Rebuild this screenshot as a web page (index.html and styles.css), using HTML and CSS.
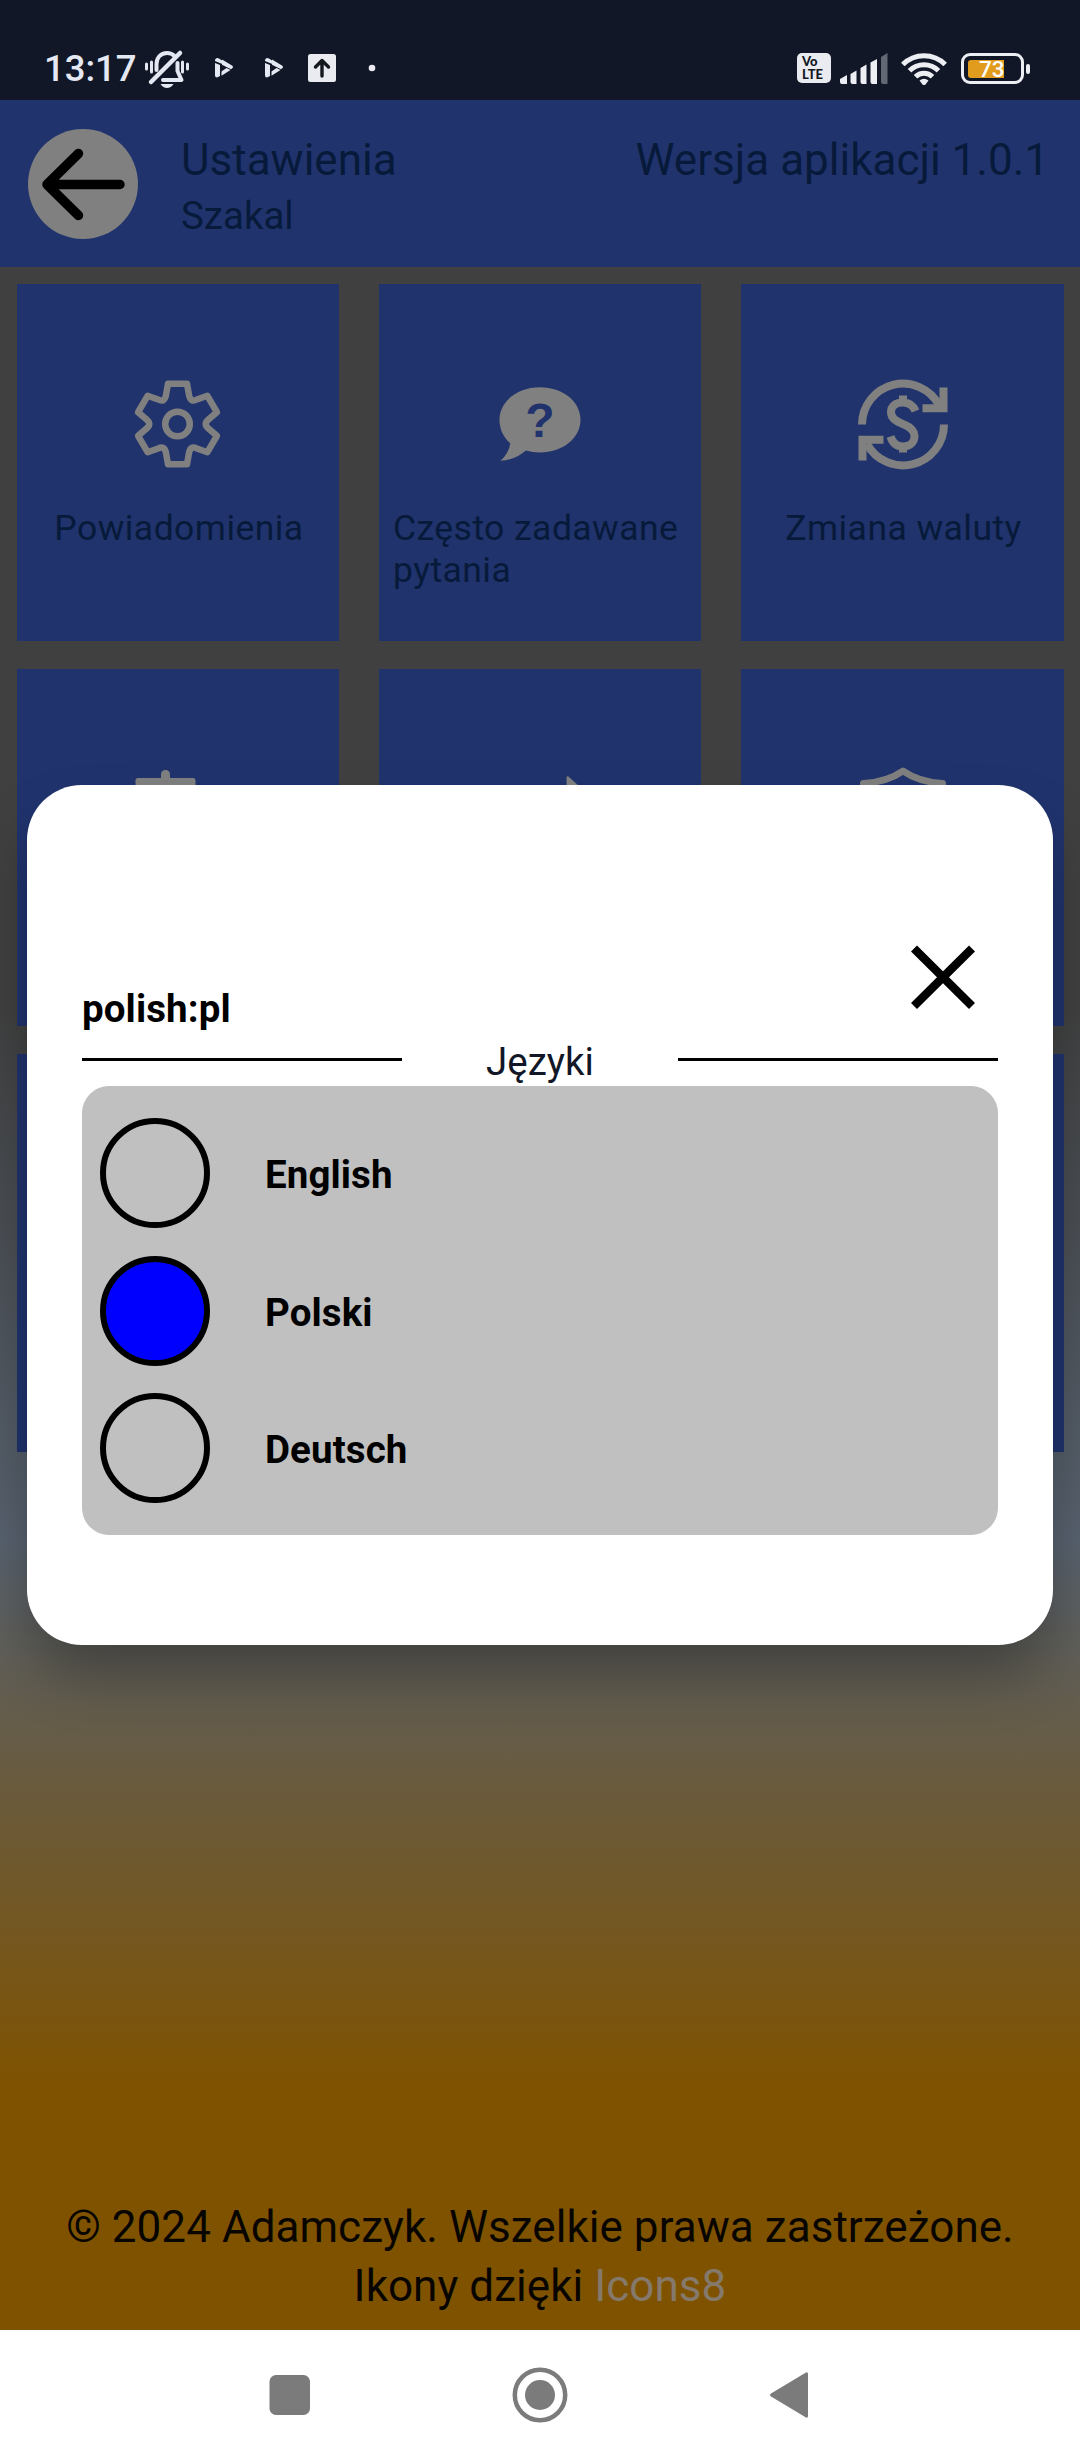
FILE: index.html
```html
<!DOCTYPE html>
<html lang="pl">
<head>
<meta charset="utf-8">
<title>Ustawienia</title>
<link rel="stylesheet" href="styles.css">
</head>
<body>
<div class="phone">
  <header class="status">
    <div class="status-left">
      <span class="clock">13:17</span>
      <svg class="bell" width="46" height="40" viewBox="0 0 46 40" fill="none" stroke="#e4e8f2" stroke-linecap="round">
        <path stroke-width="3" d="M2.5 16v5M7.5 14v10M38.500 14v10M43.500 16v5"/>
        <path stroke-width="4" stroke-linejoin="round" d="M12.500 22v-6c0-6 4-11 10.500-11 3 0 5.500 1 7.500 3M33.500 15v8l4 9H19"/>
        <path stroke-width="4.500" d="M36 5 7 34"/>
        <path fill="#e4e8f2" stroke="none" d="M16.500 36h13c-3 5.300-10 5.300-13 0z"/>
      </svg>
      <svg class="play" width="18" height="40" viewBox="0 0 18 40"><path fill="#e4e8f2" d="M0 12q1-3 4-1.500L8.500 13.500v3L0 13zM0 15l5 2v11l-3 1.500q-2 0-2-2zM7 11.500l10 6q2 1.500 0 3l-1 .8-9-4.500zM6.500 23.500l5-3.500 4 2-9 5.800z"/></svg>
      <svg class="play second" width="18" height="40" viewBox="0 0 18 40"><path fill="#e4e8f2" d="M0 12q1-3 4-1.500L8.500 13.500v3L0 13zM0 15l5 2v11l-3 1.500q-2 0-2-2zM7 11.500l10 6q2 1.500 0 3l-1 .8-9-4.500zM6.500 23.500l5-3.500 4 2-9 5.800z"/></svg>
      <svg class="upload" width="28" height="40" viewBox="0 0 28 40"><rect y="6" width="28" height="28" rx="2.500" fill="#e9ebf0"/><path d="M14 28V13M7.500 19 14 12.500l6.500 6.500" fill="none" stroke="#14181f" stroke-width="3.400" stroke-linecap="round" stroke-linejoin="round"/></svg>
      <svg class="dot" width="8" height="40" viewBox="0 0 8 40"><circle cx="4" cy="20" r="3.300" fill="#e9ebf0"/></svg>
    </div>
    <div class="status-right">
      <span class="volte"><span>Vo</span><span>LTE</span></span>
      <svg width="48" height="40" viewBox="0 0 48 40" fill="#eceef3"><path d="M0 31l7-4v9H2q-2 0-2-2zM10.500 26l6-3.500V36h-4q-2 0-2-2zM20.500 20l6-3.500V36h-4q-2 0-2-2zM30.500 14.500l6.500-3.500V36h-4.500q-2 0-2-2z"/><path fill="#636875" d="M41 9l6.500-4v31H43q-2 0-2-2z"/></svg>
      <svg class="wifi" width="46" height="40" viewBox="0 0 46 40" fill="none" stroke="#eceef3" stroke-width="5"><path d="M1.800 16.500a30 30 0 0 1 42.400 0M8.500 22.700a20.500 20.500 0 0 1 29 0M14.500 28.800a12 12 0 0 1 17 0"/><path fill="#eceef3" stroke="none" d="M18.500 32.500q4.500-3.500 9 0L24.500 36.500q-1.500 1.200-3 0z"/></svg>
      <span class="battery"><span class="charge"></span><span class="percent">73</span></span>
    </div>
  </header>

  <main class="app">
    <div class="topbar">
      <span class="back">
        <svg width="110" height="110" viewBox="0 0 110 110" fill="none" stroke="#000" stroke-width="9.500" stroke-linecap="round" stroke-linejoin="round"><path d="M92 55.500H19M50.500 24.500 19 55.500l31.500 31"/></svg>
      </span>
      <div class="titles">
        <span class="title">Ustawienia</span>
        <span class="subtitle">Szakal</span>
      </div>
      <span class="version">Wersja aplikacji 1.0.1</span>
    </div>

    <div class="tiles">
      <div class="tile">
        <svg class="icon" viewBox="-54.500 -55 110 110" fill="none" stroke="#808080" stroke-width="6.500" stroke-linejoin="round"><path d="M-9.500-40.200H9.500L11.500-29Q13-21 19.400-24.500L29.900-28.200 39.400-11.800 30.900-4.500Q25.500 0 30.900 4.500L39.400 11.800 29.900 28.200 19.400 24.500Q13 21 11.500 29L9.500 40.200H-9.500L-11.500 29Q-13 21-19.400 24.500L-29.900 28.200-39.400 11.800-30.900 4.500Q-25.500 0-30.900-4.500L-39.400-11.800-29.900-28.200-19.400-24.500Q-13-21-11.500-29Z"/><circle r="12.300"/></svg>
        <span class="label">Powiadomienia</span>
      </div>
      <div class="tile">
        <svg class="icon" viewBox="0 0 110 110"><path fill="#808080" d="M55 18.300c22.500 0 40.500 14 40.500 32.500S77.500 83.500 55 83.500c-5 0-9.500-.7-14-2-7 6-15 9.500-25.500 10.300 5.500-5 9-11 9.700-17.500C18 68 14.500 60 14.500 50.800c0-18.500 18-32.500 40.500-32.500z"/><text class="question" x="55" y="67.500" text-anchor="middle">?</text></svg>
        <span class="label">Często zadawane pytania</span>
      </div>
      <div class="tile">
        <svg class="icon" viewBox="0 0 110 110" fill="none" stroke="#808080" stroke-width="8"><path d="M14 55.500A41 41 0 0 1 91 36M96 55.500A41 41 0 0 1 19 75"/><path d="M95.500 18.500v20.700H74.500M14.500 91.500V70.800h21"/><path d="M67.500 42C65 36 61 33.500 55 33.500C47 33.500 43 37.500 43 43C43 51 51 53 56 55.500C62 58 66.500 61 66.500 67C66.500 73 62 77.500 55 77.500C48 77.500 44.500 74 42.500 67.500M55 26.500v8M55 76v7.500"/></svg>
        <span class="label">Zmiana waluty</span>
      </div>
      <div class="tile">
        <svg class="icon" viewBox="0 0 110 110" fill="none" stroke="#808080" stroke-linecap="round"><path stroke-width="9" d="M42.500 20.500v10"/><path stroke="none" fill="#808080" d="M12.500 26.500q0-2.500 2.500-2.500h55q2.500 0 2.500 2.500V34h-60z"/></svg>
      </div>
      <div class="tile">
        <svg class="icon" viewBox="0 0 110 110" fill="#808080"><path d="M81.500 23.500q.5-2 2.500-.5L106 43 82 62z"/></svg>
      </div>
      <div class="tile">
        <svg class="icon" viewBox="0 0 110 110" fill="none" stroke="#808080" stroke-width="7" stroke-linejoin="round"><path d="M55 17C45 24 30 28.500 15.500 29.500V52c0 22 16 38 39.500 46 23.500-8 39.500-24 39.500-46V29.500C80 28.500 65 24 55 17z"/></svg>
      </div>
      <div class="tile"></div>
      <div class="tile"></div>
      <div class="tile"></div>
    </div>

    <footer class="credits">© 2024 Adamczyk. Wszelkie prawa zastrzeżone.<br>Ikony dzięki <a class="link">Icons8</a></footer>

    <section class="modal">
      <div class="modal-head">
        <span class="current">polish:pl</span>
        <svg width="110" height="110" viewBox="0 0 110 110" stroke="#000" stroke-width="8.500"><path d="M26 26.500l58 57.500M84 26.500l-58 57.500"/></svg>
      </div>
      <div class="divider">
        <span class="line"></span><span class="heading">Języki</span><span class="line"></span>
      </div>
      <div class="options">
        <div class="option"><span class="radio"></span><span class="name">English</span></div>
        <div class="option"><span class="radio selected"></span><span class="name">Polski</span></div>
        <div class="option"><span class="radio"></span><span class="name">Deutsch</span></div>
      </div>
    </section>
  </main>

  <nav class="nav">
    <svg width="56" height="56" viewBox="0 0 56 56"><rect x="7.500" y="8" width="40.500" height="40" rx="6.500" fill="#7b7b7b"/></svg>
    <svg width="56" height="56" viewBox="0 0 56 56"><circle cx="28" cy="28" r="25.200" fill="none" stroke="#7b7b7b" stroke-width="4.500"/><circle cx="28" cy="28" r="15" fill="#7b7b7b"/></svg>
    <svg width="56" height="56" viewBox="0 0 56 56"><path d="M9 26.500 44 5.500q2-.8 2 1.500v42q0 2.300-2 1.500L9 29.500q-2-1.500 0-3z" fill="#7b7b7b"/></svg>
  </nav>
</div>
</body>
</html>
```

FILE: styles.css
```css
* { box-sizing: border-box; }
body {
  margin: 0;
  font-family: Roboto, "Noto Sans", sans-serif;
}
svg { display: block; flex: none; }

.phone {
  display: flex;
  flex-direction: column;
  width: 1080px;
  height: 2460px;
  overflow: hidden;
}

/* status bar */
.status {
  display: flex;
  justify-content: space-between;
  height: 100px;
  padding: 48px 56px 0 44px;
  background: #111726;
}
.status-left, .status-right { display: flex; height: 40px; }
.clock {
  width: 100px;
  font-size: 36.5px;
  font-weight: 500;
  line-height: 42px;
  color: #e4e8f2;
}
.play { margin-left: 25px; }
.play.second { margin-left: 32px; }
.upload { margin-left: 25px; }
.dot { margin-left: 32px; }
.status-right { align-items: center; }
.volte {
  display: flex;
  flex-direction: column;
  width: 34px;
  height: 30px;
  margin-right: 9px;
  padding: 2px 0 0 5px;
  border-radius: 5px;
  background: #e9ebf0;
  color: #14181f;
  font: 900 13px/13px Lato, sans-serif;
}
.wifi { margin-left: 13px; }
.battery {
  position: relative;
  width: 63px;
  height: 31px;
  margin-left: 14px;
  padding: 4px;
  border: 3px solid #eceef3;
  border-radius: 9px;
}
.battery::after {
  content: "";
  position: absolute;
  right: -9px;
  top: 8px;
  width: 4px;
  height: 10px;
  border-radius: 2px;
  background: #eceef3;
}
.charge {
  display: block;
  width: 36px;
  height: 18px;
  border-radius: 3px 0 0 3px;
  background: #e19b1d;
}
.percent {
  position: absolute;
  left: 15px;
  top: 0;
  font-size: 22.5px;
  font-weight: 500;
  line-height: 26px;
  color: #fff;
}

/* settings screen, dimmed behind the dialog */
.app {
  position: relative;
  display: flex;
  flex-direction: column;
  height: 2230px;
  background: linear-gradient(#404040 900px, #58626f 1440px, #7f5200 1990px);
}
.topbar {
  display: flex;
  height: 167px;
  padding: 29px 31px 0 28px;
  background: #20336d;
  color: #071a3a;
}
.back {
  width: 110px;
  height: 110px;
  border-radius: 50%;
  background: #808080;
}
.titles {
  display: flex;
  flex-direction: column;
  margin-left: 43px;
}
.title, .version {
  padding-top: 1px;
  font-size: 44px;
  line-height: 60px;
}
.subtitle {
  font-size: 38.5px;
  line-height: 51px;
}
.version { margin-left: auto; }

.tiles {
  display: grid;
  grid-template-columns: 322px 322px 323px;
  grid-template-rows: 357px 357px 398px;
  column-gap: 40px;
  row-gap: 28px;
  padding: 17px 0 0 17px;
}
.tile {
  display: flex;
  flex-direction: column;
  align-items: center;
  padding: 85px 12px 0 14px;
  background: #20336d;
}
.icon { width: 110px; height: 110px; margin-left: -2px; }
.question {
  font: 700 48px "Liberation Sans", sans-serif;
  fill: #20336d;
}
.label {
  margin-top: 28px;
  font-size: 35.500px;
  line-height: 42px;
  letter-spacing: .45px;
  color: #071a3a;
}

.credits {
  margin-top: auto;
  padding-bottom: 14px;
  font-size: 44px;
  line-height: 59px;
  letter-spacing: .05px;
  text-align: center;
  color: #080500;
}
.link { color: #85796c; }

/* language dialog */
.modal {
  position: absolute;
  left: 27px;
  top: 685px;
  width: 1026px;
  height: 860px;
  padding: 137px 55px 0;
  border-radius: 55px;
  background: #fff;
  box-shadow: 0 34px 60px -6px rgba(0, 0, 0, .33);
  font-size: 38.500px;
  line-height: 45px;
}
.modal-head {
  display: flex;
  justify-content: space-between;
  align-items: flex-end;
  height: 110px;
}
.current, .name {
  font-weight: 700;
  letter-spacing: .1px;
}
.current { margin-bottom: 1px; }
.divider {
  display: flex;
  align-items: center;
  height: 54px;
  padding-top: 6px;
}
.line {
  width: 320px;
  height: 3px;
  margin-bottom: 5px;
  background: #000;
}
.heading {
  flex: 1;
  margin-bottom: 2px;
  text-align: center;
  color: #111726;
}
.options {
  display: flex;
  flex-direction: column;
  gap: 27.500px;
  height: 449px;
  padding: 32px 18px 0;
  border-radius: 27px;
  background: #c0c0c0;
}
.option {
  display: flex;
  align-items: center;
  gap: 55px;
}
.radio {
  width: 110px;
  height: 110px;
  border: 6px solid #000;
  border-radius: 50%;
}
.selected { background: #00f; }
.name { padding-top: 3px; }

/* system navigation */
.nav {
  display: flex;
  justify-content: center;
  gap: 194px;
  height: 130px;
  padding-top: 37px;
  background: #fff;
}
```
